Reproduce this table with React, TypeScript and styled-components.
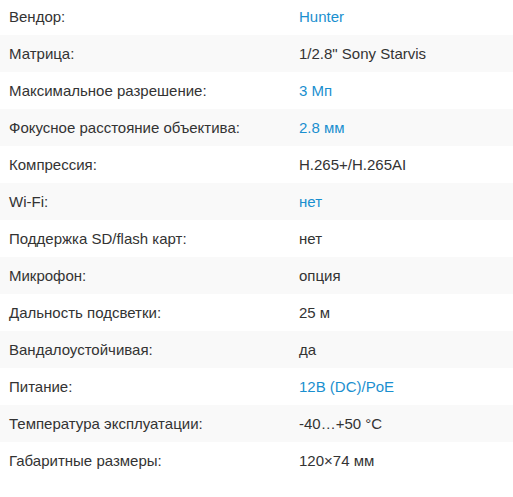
import React from "react";
import styled, { createGlobalStyle } from "styled-components";

const Global = createGlobalStyle`
  html, body { margin: 0; padding: 0; background: #fff; }
  body { font-family: "Liberation Sans", Arial, sans-serif; }
`;

const Table = styled.div`
  display: flex;
  flex-direction: column;
  margin-top: -2px;
  width: 513px;
`;

const Row = styled.div<{ $striped: boolean }>`
  display: grid;
  grid-template-columns: 290px 1fr;
  align-items: center;
  height: 37px;
  background: ${(p) => (p.$striped ? "#f9f9f9" : "#ffffff")};
`;

const Label = styled.div`
  padding-left: 9px;
  font-size: 15px;
  color: #333333;
`;

const Value = styled.div<{ $link: boolean }>`
  padding-left: 9px;
  font-size: 15px;
  color: ${(p) => (p.$link ? "#1a8fcf" : "#333333")};
`;

const rows: { label: string; value: string; link?: boolean }[] = [
  { label: "Вендор:", value: "Hunter", link: true },
  { label: "Матрица:", value: "1/2.8\" Sony Starvis" },
  { label: "Максимальное разрешение:", value: "3 Мп", link: true },
  { label: "Фокусное расстояние объектива:", value: "2.8 мм", link: true },
  { label: "Компрессия:", value: "H.265+/H.265AI" },
  { label: "Wi-Fi:", value: "нет", link: true },
  { label: "Поддержка SD/flash карт:", value: "нет" },
  { label: "Микрофон:", value: "опция" },
  { label: "Дальность подсветки:", value: "25 м" },
  { label: "Вандалоустойчивая:", value: "да" },
  { label: "Питание:", value: "12В (DC)/PoE", link: true },
  { label: "Температура эксплуатации:", value: "-40…+50 °C" },
  { label: "Габаритные размеры:", value: "120×74 мм" },
];

export default function App() {
  return (
    <>
      <Global />
      <Table>
        {rows.map((r, i) => (
          <Row key={r.label} $striped={i % 2 === 1}>
            <Label>{r.label}</Label>
            <Value $link={!!r.link}>{r.value}</Value>
          </Row>
        ))}
      </Table>
    </>
  );
}
